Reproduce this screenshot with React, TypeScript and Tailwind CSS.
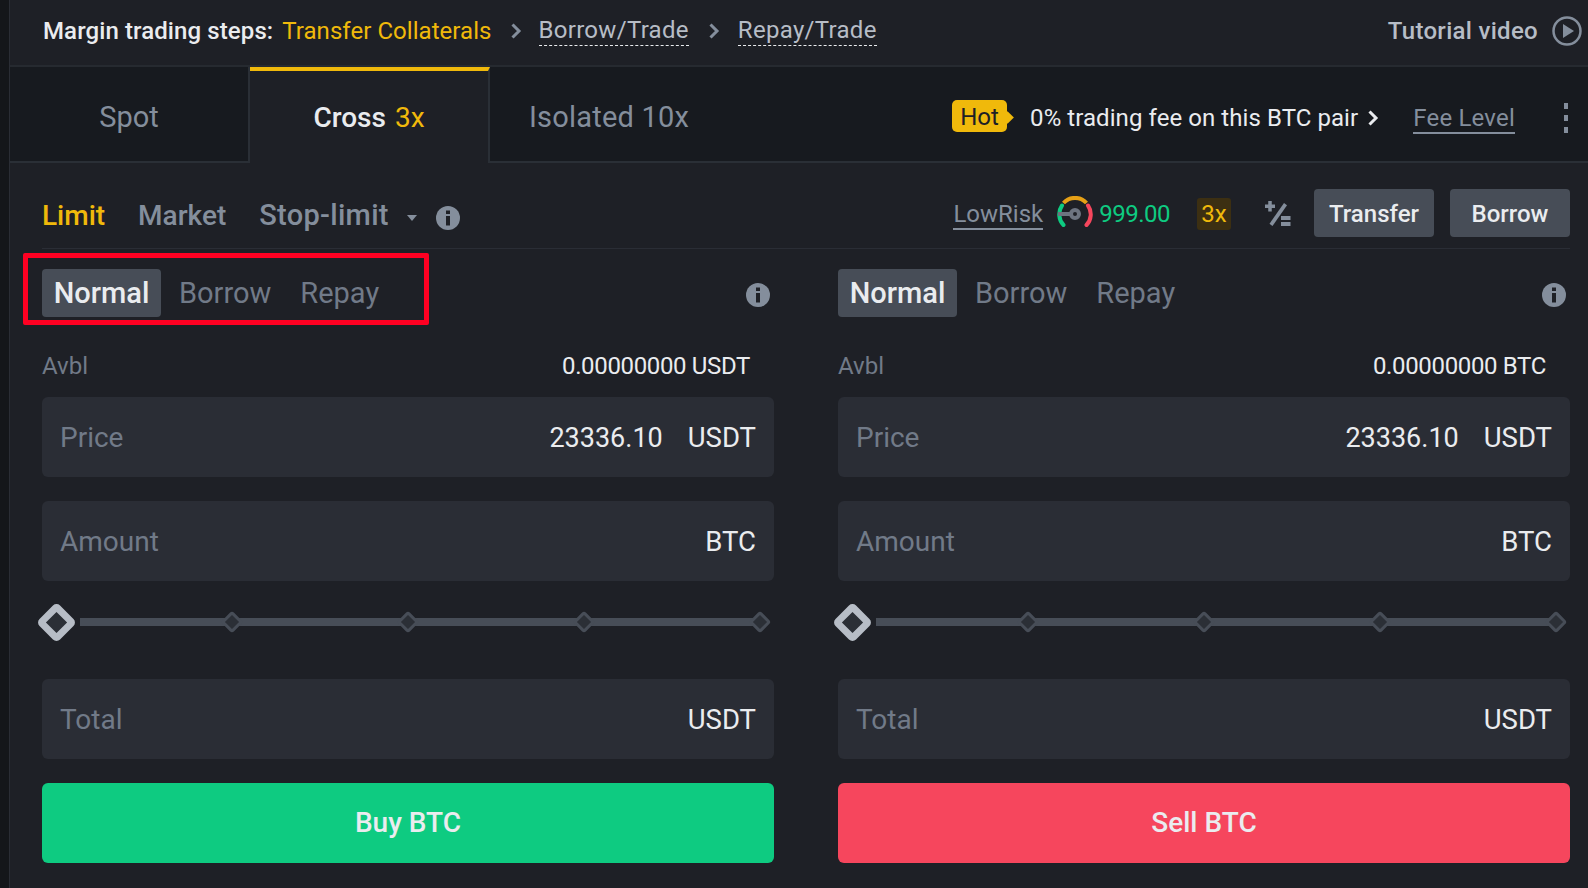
const InfoIcon = () => (
  <svg width="24" height="24" viewBox="0 0 24 24" className="shrink-0">
    <circle cx="12" cy="12" r="12" fill="#848e9c" />
    <rect x="10" y="10" width="4" height="9.5" fill="#1e2026" />
    <rect x="10" y="4.5" width="4" height="3.5" fill="#1e2026" />
  </svg>
);

const Chevron = ({ color = "#848e9c" }: { color?: string }) => (
  <svg width="12" height="16" viewBox="0 0 12 16" fill="none" className="shrink-0">
    <path d="M2.5 1.5l6.5 6.5-6.5 6.5" stroke={color} strokeWidth="3" />
  </svg>
);

const GaugeIcon = () => (
  <svg width="36" height="32" viewBox="0 0 36 32" fill="none" className="shrink-0">
    <path d="M6.5 29A15.5 15.5 0 0 1 5 9.5" stroke="#0ecb81" strokeWidth="4" strokeLinecap="round" />
    <path d="M6.5 7A15.5 15.5 0 0 1 29.5 7" stroke="#e6a016" strokeWidth="4" />
    <path d="M31 9.5A15.5 15.5 0 0 1 29.5 29" stroke="#f6465d" strokeWidth="4" strokeLinecap="round" />
    <circle cx="18" cy="18" r="4" stroke="#6d7480" strokeWidth="4" />
    <rect x="1" y="16" width="14" height="4" fill="#6d7480" />
  </svg>
);

const PercentIcon = () => (
  <svg width="26" height="26" viewBox="0 0 26 26" fill="#848e9c" className="shrink-0">
    <rect x="0" y="3.5" width="10" height="3.5" />
    <rect x="3.25" y="0" width="3.5" height="10.5" />
    <path d="M19 2l3 2.2L7.5 25 4.5 22.8z" />
    <rect x="16" y="15" width="9.5" height="4" />
    <rect x="16" y="21" width="9.5" height="4" />
  </svg>
);

const PlayIcon = () => (
  <svg width="30" height="30" viewBox="0 0 30 30" fill="none" className="shrink-0">
    <circle cx="15" cy="15" r="13.5" stroke="#848e9c" strokeWidth="2.5" />
    <path d="M11 8l11 7-11 7z" fill="#848e9c" />
  </svg>
);

function Field({ label, value, unit }: { label: string; value?: string; unit: string }) {
  return (
    <div className="flex h-[80px] items-center rounded-md bg-[#2a2d35] px-[18px] pt-[2px] text-[27.5px]">
      <span className="text-[28px] text-[#717a88]">{label}</span>
      {value && <span className="ml-auto text-[27px] text-[#eaecef]">{value}</span>}
      <span className={`text-[#eaecef] ${value ? "ml-[25px]" : "ml-auto"}`}>{unit}</span>
    </div>
  );
}

function Slider() {
  return (
    <div className="relative mt-[21px] flex h-[40px] items-center justify-between">
      <div className="absolute left-[38px] right-[14px] h-[8px] bg-[#474d57]" />
      <div className="relative z-10 flex w-[28px] justify-center">
        <div className="h-[29px] w-[29px] shrink-0 rotate-45 rounded-[5px] border-[7px] border-[#b7bdc6] bg-[#2b2f36]" />
      </div>
      {[0, 1, 2, 3].map((i) => (
        <div key={i} className="relative z-10 flex w-[28px] justify-center">
          <div className="h-[16px] w-[16px] rotate-45 rounded-[3px] border-[3px] border-[#474d57] bg-[#2b2f36]" />
        </div>
      ))}
    </div>
  );
}

function OrderForm({
  avbl,
  action,
  actionColor,
  showBox,
}: {
  avbl: string;
  action: string;
  actionColor: string;
  showBox?: boolean;
}) {
  return (
    <div className="flex w-[732px] flex-col">
      <div className="relative flex h-[48px] items-center pr-[4px] text-[29px]">
        {showBox && (
          <div className="absolute left-[-19px] top-[-16px] h-[72px] w-[406px] rounded-[2px] border-[5px] border-[#ff0022]" />
        )}
        <div className="flex h-[48px] w-[119px] items-center justify-center rounded-[4px] bg-[#474d57] pt-[2px] font-medium text-[#eaecef]">
          Normal
        </div>
        <span className="ml-[18px] mt-[2px] text-[#717a88]">Borrow</span>
        <span className="ml-[29px] mt-[2px] text-[#717a88]">Repay</span>
        <span className="ml-auto mt-[4px]">
          <InfoIcon />
        </span>
      </div>
      <div className="mt-[31px] flex h-[36px] items-center justify-between pr-[24px] text-[24px]">
        <span className="text-[#717a88]">Avbl</span>
        <span className="tracking-[-0.35px] text-[#eaecef]">{avbl}</span>
      </div>
      <div className="mt-[13px] flex flex-col gap-[24px]">
        <Field label="Price" value="23336.10" unit="USDT" />
        <Field label="Amount" unit="BTC" />
      </div>
      <Slider />
      <div className="mt-[37px]">
        <Field label="Total" unit="USDT" />
      </div>
      <button
        className={`mt-[24px] h-[80px] rounded-md text-[28px] font-medium text-[#eaecef] ${actionColor}`}
      >
        {action}
      </button>
    </div>
  );
}

export default function App() {
  return (
    <div className="flex h-[888px] w-[1588px] overflow-hidden bg-[#1e2026] font-['Roboto',sans-serif]">
      <div className="w-[10px] shrink-0 border-r border-[#2a2d35] bg-[#14161a]" />
      <div className="flex min-w-0 grow flex-col">
        {/* steps bar */}
        <div className="flex h-[67px] shrink-0 items-center border-b-2 border-[#262a30] pb-[4px] pl-[33px] pr-[6px] text-[24px]">
          <span className="font-medium tracking-[0.1px] text-[#eaecef]">Margin trading steps:</span>
          <span className="ml-[9px] tracking-[0.05px] text-[#f0b90b]">Transfer Collaterals</span>
          <span className="ml-[18px]">
            <Chevron />
          </span>
          <span className="ml-[17px] border-b border-dashed border-[#eaecef] leading-[30px] tracking-[0.3px] text-[#b7bdc6]">
            Borrow/Trade
          </span>
          <span className="ml-[19px]">
            <Chevron />
          </span>
          <span className="ml-[18px] border-b border-dashed border-[#eaecef] leading-[30px] tracking-[0.3px] text-[#b7bdc6]">
            Repay/Trade
          </span>
          <span className="ml-auto mr-[14px] font-medium tracking-[0.3px] text-[#b7bdc6]">Tutorial video</span>
          <PlayIcon />
        </div>

        {/* margin tabs */}
        <div className="flex h-[96px] shrink-0 items-center bg-[#171a1f] text-[29px]">
          <div className="flex h-full w-[240px] items-center justify-center border-b-2 border-r-2 border-[#2a2f36] pt-[8px] text-[#848e9c]">
            Spot
          </div>
          <div className="flex h-full w-[240px] items-center justify-center gap-[9px] border-t-4 border-r-2 border-t-[#f0b90b] border-r-[#2a2f36] bg-[#1e2026] pt-[2px] text-[28px] font-medium text-[#eaecef]">
            Cross <span className="font-normal text-[#f0b90b]">3x</span>
          </div>
          <div className="flex h-full grow items-center border-b-2 border-[#2a2f36] pl-[39px] pr-[20px] pt-[8px]">
            <span className="tracking-[0.2px] text-[#848e9c]">Isolated 10x</span>
            <div className="relative -mt-[4px] ml-auto flex h-[32px] w-[55px] items-center justify-center rounded-[5px] bg-[#f0b90b] pt-[2px] text-[24px] text-[#1e2026]">
              Hot
              <span className="absolute right-[-5px] h-[9px] w-[9px] rotate-45 bg-[#f0b90b]" />
            </div>
            <span className="ml-[23px] text-[24px] tracking-[0.07px] text-[#eaecef]">
              0% trading fee on this BTC pair
            </span>
            <span className="ml-[9px]">
              <Chevron color="#eaecef" />
            </span>
            <span className="ml-[34px] mt-[2px] border-b-2 border-[#848e9c] text-[24px] leading-[27px] tracking-[0.2px] text-[#848e9c]">
              Fee Level
            </span>
            <span className="ml-[49px] flex flex-col gap-[6px]">
              <span className="h-[6px] w-[4px] bg-[#848e9c]" />
              <span className="h-[6px] w-[4px] bg-[#848e9c]" />
              <span className="h-[6px] w-[4px] bg-[#848e9c]" />
            </span>
          </div>
        </div>

        <div className="flex grow flex-col pl-[32px] pr-[18px]">
          {/* order type row */}
          <div className="flex h-[86px] shrink-0 items-center border-b border-[#2a2d35] pt-[21px]">
            <span className="text-[28px] font-medium text-[#f0b90b]">Limit</span>
            <span className="ml-[33px] text-[28px] font-medium text-[#848e9c]">Market</span>
            <span className="ml-[33px] text-[29px] font-medium tracking-[0.3px] text-[#848e9c]">Stop-limit</span>
            <span className="ml-[18px] mt-[4px] h-0 w-0 border-x-[5px] border-t-[6px] border-x-transparent border-t-[#848e9c]" />
            <span className="ml-[19px] mt-[4px]">
              <InfoIcon />
            </span>
            <div className="-mt-[4px] ml-auto flex items-center">
              <span className="mt-[3px] border-b-2 border-[#848e9c] text-[24px] leading-[27px] text-[#848e9c]">
                LowRisk
              </span>
              <span className="-mt-[5px] ml-[14px]">
                <GaugeIcon />
              </span>
              <span className="ml-[6px] text-[24px] tracking-[-0.5px] text-[#0ecb81]">999.00</span>
              <span className="ml-[27px] flex h-[32px] w-[34px] items-center justify-center rounded-[3px] bg-[#3c2f12] text-[24px] text-[#f0b90b]">
                3x
              </span>
              <span className="ml-[34px]">
                <PercentIcon />
              </span>
              <button className="-mt-[2px] ml-[23px] h-[48px] w-[120px] rounded-[4px] bg-[#474d57] pt-[2px] text-[24px] font-medium text-[#eaecef]">
                Transfer
              </button>
              <button className="-mt-[2px] ml-[16px] h-[48px] w-[120px] rounded-[4px] bg-[#474d57] pt-[2px] text-[24px] font-medium text-[#eaecef]">
                Borrow
              </button>
            </div>
          </div>

          {/* buy and sell forms */}
          <div className="mt-[20px] flex gap-[64px]">
            <OrderForm avbl="0.00000000 USDT" action="Buy BTC" actionColor="bg-[#0ecb81]" showBox />
            <OrderForm avbl="0.00000000 BTC" action="Sell BTC" actionColor="bg-[#f6465d]" />
          </div>
        </div>
      </div>
    </div>
  );
}
